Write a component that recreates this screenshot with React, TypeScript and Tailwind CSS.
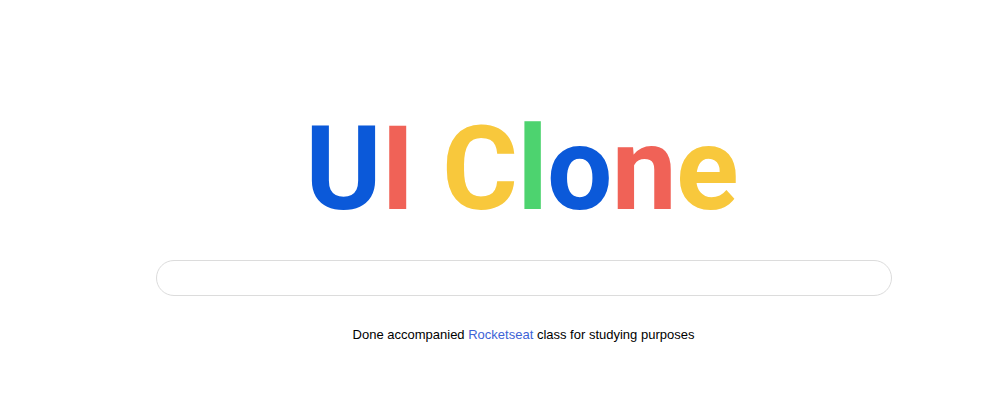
const letters: [string, string][] = [
  ['U', 'text-[#0b59d9]'],
  ['I', 'text-[#f06257]'],
  [' ', ''],
  ['C', 'text-[#f8c83c]'],
  ['l', 'text-[#4dd36f]'],
  ['o', 'text-[#0b59d9]'],
  ['n', 'text-[#f06257]'],
  ['e', 'text-[#f8c83c]'],
];

export default function App() {
  return (
    <div className="min-h-screen bg-white pl-[62px] font-['Liberation_Sans',Arial,sans-serif]">
      <div className="flex flex-col items-center pt-[111px]">
        <h1 className="mr-[4px] font-['Roboto',sans-serif] text-[116px] font-bold leading-none tracking-[-0.8px] whitespace-pre">
          {letters.map(([ch, cls], i) => (
            <span key={i} className={cls}>{ch}</span>
          ))}
        </h1>
        <input
          className="mt-[33px] h-[36px] w-[736px] rounded-full border border-[#dcdcdc] px-4 text-base outline-none"
          type="text"
        />
        <p className="mt-[29px] text-[13px] text-black">
          Done accompanied <a href="#" className="text-[#3d63d6]">Rocketseat</a> class for studying purposes
        </p>
      </div>
    </div>
  );
}
